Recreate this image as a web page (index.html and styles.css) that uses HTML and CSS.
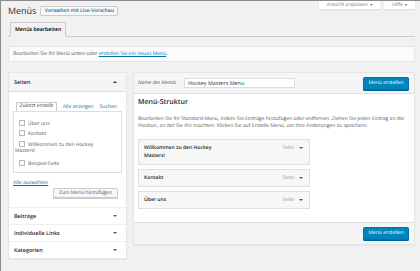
FILE: index.html
```html
<!DOCTYPE html>
<html lang="de">
<head>
<meta charset="utf-8">
<title>Menüs</title>
<link rel="stylesheet" href="styles.css">
</head>
<body>
<div class="wrap">
  <div class="top">
    <div class="title-row">
      <h1 class="title">Menüs</h1>
      <a class="title-action">Verwalten mit Live-Vorschau</a>
    </div>
    <div class="screen-meta">
      <span class="meta-btn meta-wide">Ansicht anpassen <span class="meta-caret">▾</span></span>
      <span class="meta-btn meta-narrow">Hilfe <span class="meta-caret">▾</span></span>
    </div>
  </div>
  <div class="tabs"><span class="tab">Menüs bearbeiten</span></div>
  <div class="notice">Bearbeiten Sie Ihr Menü unten oder <a class="link">erstellen Sie ein neues Menü</a>.</div>
  <div class="columns">
    <aside class="sidebar">
      <div class="acc-title acc-open">Seiten <span class="tri tri-up"></span></div>
      <div class="acc-body">
        <div class="subtabs">
          <span class="subtab">Zuletzt erstellt</span>
          <a class="subtab-link">Alle anzeigen</a>
          <a class="subtab-link">Suchen</a>
        </div>
        <ul class="checklist">
          <li class="check-item"><span class="checkbox"></span>Über uns</li>
          <li class="check-item"><span class="checkbox"></span>Kontakt</li>
          <li class="check-item check-wrap"><span class="checkbox"></span>Willkommen zu den Hockey Masters!</li>
          <li class="check-item"><span class="checkbox"></span>Beispiel-Seite</li>
        </ul>
        <a class="link select-all">Alle auswählen</a>
        <div class="add-row"><span class="btn-secondary">Zum Menü hinzufügen</span></div>
      </div>
      <div class="acc-title">Beiträge <span class="tri"></span></div>
      <div class="acc-title">Individuelle Links <span class="tri"></span></div>
      <div class="acc-title">Kategorien <span class="tri"></span></div>
    </aside>
    <section class="editor">
      <header class="editor-head">
        <span class="name-label">Name des Menüs</span>
        <span class="name-input">Hockey Masters Menu</span>
        <span class="btn-primary">Menü erstellen</span>
      </header>
      <div class="editor-body">
        <h3 class="struct-title">Menü-Struktur</h3>
        <p class="struct-desc">Bearbeiten Sie Ihr Standard-Menü, indem Sie Einträge hinzufügen oder entfernen. Ziehen Sie jeden Eintrag an die Position, an der Sie ihn möchten. Klicken Sie auf Erstelle Menü, um Ihre Änderungen zu speichern.</p>
        <ul class="menu-items">
          <li class="menu-item"><span class="item-title">Willkommen zu den Hockey Masters!</span><span class="item-meta">Seite <span class="tri"></span></span></li>
          <li class="menu-item"><span class="item-title">Kontakt</span><span class="item-meta">Seite <span class="tri"></span></span></li>
          <li class="menu-item"><span class="item-title">Über uns</span><span class="item-meta">Seite <span class="tri"></span></span></li>
        </ul>
      </div>
      <footer class="editor-foot"><span class="btn-primary">Menü erstellen</span></footer>
    </section>
  </div>
</div>
</body>
</html>
```
FILE: styles.css
```css
* { box-sizing: border-box; }
html { overflow: hidden; background: #f1f1f1; }
body {
  margin: 0;
  height: 271px;
  background: #f1f1f1;
  border-top: 1px solid #8c8c8c;
  border-left: 1px solid #8c8c8c;
  font-family: "Open Sans", "DejaVu Sans", sans-serif;
  font-size: 5.06px;
  color: #444;
  text-rendering: geometricPrecision;
}
.wrap { margin: 0 5px 0 7px; }
.link { color: #0073aa; text-decoration: underline; }

.top { display: flex; justify-content: space-between; align-items: flex-start; }
.title-row { display: flex; align-items: center; padding-top: 4px; height: 16px; }
.title { margin: 0; font-size: 8.95px; line-height: 12px; font-weight: 400; color: #23282d; }
.title-action {
  margin-left: 4px; height: 10px; line-height: 8px; padding: 0 3.5px;
  border: 1px solid #ccc; border-radius: 1px; background: #f7f7f7;
  color: #0073aa; font-size: 5px; font-weight: 600;
}
.screen-meta { display: flex; gap: 4px; }
.meta-btn {
  height: 8px; line-height: 8px; background: #fff; color: #72777c;
  font-size: 5.06px; text-align: center;
  box-shadow: 0 1px 1px rgba(0,0,0,.08);
}
.meta-wide { width: 61px; }
.meta-narrow { width: 31px; }
.meta-caret { font-size: 4px; color: #555; margin-left: 1px; }

.tabs { margin-top: 5px; display: flex; padding-left: 2px; border-bottom: 1px solid #ccc; }
.tab {
  height: 15px; line-height: 13px; padding: 0 4px; margin-bottom: -1px;
  border: 1px solid #ccc; border-bottom: 1px solid #f1f1f1; background: #f1f1f1;
  font-size: 5.25px; font-weight: 600; color: #000;
}
.notice {
  margin-top: 9px; height: 16px; line-height: 14px; padding: 0 4px;
  border: 1px solid #e5e5e5; background: #fbfbfb; color: #555;
}

.columns { margin-top: 10px; display: grid; grid-template-columns: 119px 1fr; gap: 6px; align-items: start; }

.sidebar { background: #fff; border: 1px solid #e5e5e5; box-shadow: 0 1px 1px rgba(0,0,0,.04); }
.acc-title {
  display: flex; justify-content: space-between; align-items: center;
  height: 17px; padding: 0 9px 0 5px; border-top: 1px solid #eee;
  font-size: 5.45px; font-weight: 600; color: #23282d;
}
.acc-open { height: 19px; border-top: 0; border-bottom: 1px solid #ddd; background: #f5f5f5; }
.tri {
  display: inline-block; width: 0; height: 0;
  border-left: 2px solid transparent; border-right: 2px solid transparent;
  border-top: 2.5px solid #555;
}
.tri-up { border-top: 0; border-bottom: 2.5px solid #333; }
.acc-body { padding: 10px 4px 9px 4px; }
.subtabs { display: flex; align-items: center; gap: 6px; padding-left: 3px; height: 9px; }
.subtab { height: 9px; line-height: 7px; padding: 0 2.5px; border: 1px solid #ccc; border-bottom: 0; color: #32373c; }
.subtab-link { color: #0073aa; }
.checklist {
  margin: 0; padding: 7.5px 9px 5px 1px; list-style: none; height: 62px;
  border: 1px solid #ddd; background: #fff; color: #555;
}
.check-item { line-height: 7px; margin-bottom: 3px; }
.check-wrap { margin-bottom: 5px; }
.checkbox {
  display: inline-block; width: 6px; height: 6px; margin: 0 3px 0 4px; vertical-align: -1.5px;
  border: 1px solid #b4b9be; background: #fff;
}
.select-all { display: block; margin-top: 7px; line-height: 6px; }
.add-row { display: flex; justify-content: flex-end; padding-right: 4px; margin-top: 2px; }
.btn-secondary {
  height: 10px; line-height: 8px; padding: 0 5px; border: 1px solid #ccc; border-radius: 1px;
  background: #f7f7f7; color: #555; box-shadow: 0 1px 0 #ccc;
}

.editor { background: #fff; border: 1px solid #e5e5e5; box-shadow: 0 1px 1px rgba(0,0,0,.04); }
.editor-head {
  display: flex; align-items: center; height: 21px; padding: 0 5px 0 4px;
  background: #f5f5f5; border-bottom: 1px solid #dfdfdf;
}
.name-label { font-style: italic; color: #555; width: 46px; }
.name-input {
  width: 111px; height: 10px; line-height: 8px; padding: 0 3px;
  border: 1px solid #ddd; background: #fff; color: #32373c; font-size: 5.45px;
}
.btn-primary {
  margin-left: auto; height: 13px; line-height: 11px; padding: 0 4.3px;
  background: #0085ba; border: 1px solid #0073aa; border-radius: 1.5px;
  box-shadow: 0 1px 0 #006799; color: #fff;
}
.editor-body { padding: 5px 3px 13px 4px; }
.struct-title { margin: 0; font-size: 7px; line-height: 8px; font-weight: 600; color: #23282d; }
.struct-desc { margin: 8.5px 0 0; line-height: 7px; color: #555; }
.menu-items { list-style: none; margin: 9.5px 0 0; padding: 0; width: 172px; }
.menu-item {
  display: flex; justify-content: space-between; align-items: flex-start;
  margin-bottom: 4px; padding: 4px 6px 4px 5px; line-height: 8px;
  background: #f6f7f7; border: 1px solid #dfdfdf;
}
.menu-item:last-child { margin-bottom: 0; }
.item-title { max-width: 80px; font-weight: 600; color: #23282d; }
.item-meta { display: flex; align-items: center; gap: 5px; color: #999; }
.editor-foot {
  display: flex; justify-content: flex-end; align-items: center; height: 22px; padding: 0 5px;
  background: #f5f5f5; border-top: 1px solid #dfdfdf;
}
```
